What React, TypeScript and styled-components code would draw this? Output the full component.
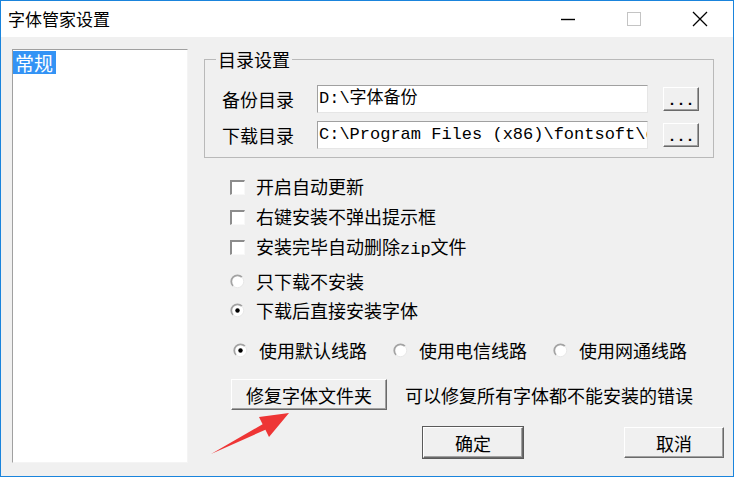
import React from 'react';
import styled, { createGlobalStyle } from 'styled-components';

const GlobalStyle = createGlobalStyle`
  html, body {
    margin: 0;
    padding: 0;
    background: #ffffff;
  }
  * {
    box-sizing: border-box;
  }
`;

const cjk = `"Noto Sans CJK SC", "Noto Sans", sans-serif`;
const mono = `"Liberation Mono", "Noto Sans CJK SC", monospace`;

const Window = styled.div`
  position: relative;
  width: 734px;
  height: 477px;
  border: 1px solid #1a84dc;
  background: #f0f0f0;
  display: flex;
  flex-direction: column;
  font-family: ${cjk};
  color: #000;
  overflow: hidden;
`;

const TitleBar = styled.div`
  height: 36px;
  background: #ffffff;
  display: flex;
  align-items: center;
  flex-shrink: 0;
`;

const Title = styled.div`
  flex: 1;
  padding-left: 7px;
  font-size: 17px;
  line-height: 36px;
`;

const CaptionButton = styled.div`
  width: 66px;
  height: 36px;
  display: flex;
  align-items: center;
  justify-content: center;
`;

const Body = styled.div`
  flex: 1;
  display: flex;
  align-items: flex-start;
  padding: 12px 9px 0 11px;
  gap: 16px;
`;

const ListBox = styled.div`
  width: 176px;
  height: 414px;
  background: #ffffff;
  border-top: 1px solid #a0a0a0;
  border-left: 1px solid #a0a0a0;
  border-right: 1px solid #f4f4f4;
  border-bottom: 1px solid #f4f4f4;
  padding: 1px 0 0 0;
`;

const ListItem = styled.div<{ $selected?: boolean }>`
  display: inline-block;
  padding: 0 3px 0 2px;
  height: 23px;
  line-height: 23px;
  font-size: 19px;
  background: ${({ $selected }) => ($selected ? '#3393f5' : 'transparent')};
  color: ${({ $selected }) => ($selected ? '#ffffff' : '#000000')};
`;

const Panel = styled.div`
  flex: 1;
  display: flex;
  flex-direction: column;
`;

const GroupBox = styled.fieldset`
  width: 510px;
  margin: 0;
  padding: 16px 14px 8px 17px;
  border: 1px solid #b9b9b9;
  display: flex;
  flex-direction: column;
  gap: 8px;
`;

const Legend = styled.legend`
  margin-left: -6px;
  padding: 0 2px;
  font-size: 18px;
  line-height: 20px;
`;

const PathRow = styled.div`
  display: flex;
  align-items: center;
  height: 28px;
`;

const PathLabel = styled.div`
  width: 95px;
  font-size: 18px;
  line-height: 28px;
`;

const PathInput = styled.div`
  width: 331px;
  height: 28px;
  background: #ffffff;
  border-top: 1px solid #a0a0a0;
  border-left: 1px solid #a0a0a0;
  border-right: 1px solid #e6e6e6;
  border-bottom: 1px solid #e6e6e6;
  padding: 0 0 0 1px;
  font-family: ${mono};
  font-size: 17px;
  line-height: 26px;
  white-space: nowrap;
  overflow: hidden;
`;

const Button3D = styled.div<{ $default?: boolean }>`
  display: flex;
  align-items: center;
  justify-content: center;
  background: #f0f0f0;
  border-top: 1px solid #ffffff;
  border-left: 1px solid #ffffff;
  border-right: 1px solid #6a6a6a;
  border-bottom: 1px solid #6a6a6a;
  box-shadow: inset -1px -1px 0 #a0a0a0
    ${({ $default }) => ($default ? ', 0 0 0 1px #5a5a5a' : '')};
  font-size: 18px;
`;

const BrowseButton = styled(Button3D)`
  margin-left: 15px;
  width: 36px;
  height: 24px;
  align-items: flex-end;
  padding-bottom: 3px;
  font-family: ${mono};
  font-weight: bold;
  font-size: 15px;
  line-height: 10px;
  letter-spacing: 0px;
`;

const OptionGroup = styled.div<{ $top: number; $gap: number }>`
  display: flex;
  flex-direction: column;
  gap: ${({ $gap }) => $gap}px;
  margin-top: ${({ $top }) => $top}px;
  padding-left: 26px;
`;

const OptionRow = styled.div`
  display: flex;
  align-items: center;
  height: 24px;
  gap: 11px;
  font-size: 18px;
`;

const CheckBox = styled.span`
  width: 15px;
  height: 15px;
  flex-shrink: 0;
  background: #ffffff;
  border-top: 2px solid #8c8c8c;
  border-left: 2px solid #8c8c8c;
  border-right: 1px solid #f8f8f8;
  border-bottom: 1px solid #f8f8f8;
  margin-top: 3px;
`;

const MonoText = styled.span`
  font-family: ${mono};
  font-size: 17px;
`;

const LineRow = styled.div`
  display: flex;
  align-items: center;
  gap: 26px;
  height: 24px;
  margin-top: 16px;
  padding-left: 29px;
`;

const RepairRow = styled.div`
  display: flex;
  align-items: center;
  gap: 18px;
  margin-top: 17px;
  padding-left: 27px;
  font-size: 18px;
`;

const RepairButton = styled(Button3D)`
  width: 156px;
  height: 31px;
`;

const Footer = styled.div`
  display: flex;
  justify-content: flex-end;
  gap: 101px;
  margin-top: 17px;
`;

const DialogButton = styled(Button3D)`
  width: 100px;
  height: 31px;
`;

const Arrow = styled.svg`
  position: absolute;
  left: 0;
  top: 0;
  pointer-events: none;
`;

const Radio: React.FC<{ checked?: boolean }> = ({ checked }) => (
  <svg width="15" height="15" viewBox="0 0 15 15" style={{ flexShrink: 0 }}>
    <circle cx="7.5" cy="7.5" r="6.2" fill="#ffffff" />
    <path d="M3.1 11.9 A6.2 6.2 0 0 1 11.9 3.1" fill="none" stroke="#a3a3a3" strokeWidth="1.8" />
    <path d="M11.9 3.1 A6.2 6.2 0 0 1 3.1 11.9" fill="none" stroke="#e8e8e8" strokeWidth="1" />
    {checked && <circle cx="7.5" cy="7.5" r="2.2" fill="#000000" />}
  </svg>
);

const App: React.FC = () => {
  return (
    <>
      <GlobalStyle />
      <Window>
        <TitleBar>
          <Title>字体管家设置</Title>
          <CaptionButton>
            <svg width="16" height="16" viewBox="0 0 16 16">
              <line x1="1" y1="8.5" x2="15" y2="8.5" stroke="#000" strokeWidth="1.4" />
            </svg>
          </CaptionButton>
          <CaptionButton>
            <svg width="16" height="16" viewBox="0 0 16 16">
              <rect x="1.5" y="1.5" width="13" height="13" fill="none" stroke="#c4c4c4" strokeWidth="1" />
            </svg>
          </CaptionButton>
          <CaptionButton>
            <svg width="16" height="16" viewBox="0 0 16 16">
              <path d="M1 1 L15 15 M15 1 L1 15" stroke="#000" strokeWidth="1.3" />
            </svg>
          </CaptionButton>
        </TitleBar>
        <Body>
          <ListBox>
            <ListItem $selected>常规</ListItem>
          </ListBox>
          <Panel>
            <GroupBox>
              <Legend>目录设置</Legend>
              <PathRow>
                <PathLabel>备份目录</PathLabel>
                <PathInput>D:\字体备份</PathInput>
                <BrowseButton>...</BrowseButton>
              </PathRow>
              <PathRow>
                <PathLabel>下载目录</PathLabel>
                <PathInput>C:\Program Files (x86)\fontsoft\d</PathInput>
                <BrowseButton>...</BrowseButton>
              </PathRow>
            </GroupBox>

            <OptionGroup $top={16} $gap={6}>
              <OptionRow>
                <CheckBox />
                开启自动更新
              </OptionRow>
              <OptionRow>
                <CheckBox />
                右键安装不弹出提示框
              </OptionRow>
              <OptionRow>
                <CheckBox />
                <span>
                  安装完毕自动删除<MonoText>zip</MonoText>文件
                </span>
              </OptionRow>
            </OptionGroup>

            <OptionGroup $top={11} $gap={5}>
              <OptionRow>
                <Radio />
                只下载不安装
              </OptionRow>
              <OptionRow>
                <Radio checked />
                下载后直接安装字体
              </OptionRow>
            </OptionGroup>

            <LineRow>
              <OptionRow>
                <Radio checked />
                使用默认线路
              </OptionRow>
              <OptionRow>
                <Radio />
                使用电信线路
              </OptionRow>
              <OptionRow>
                <Radio />
                使用网通线路
              </OptionRow>
            </LineRow>

            <RepairRow>
              <RepairButton>修复字体文件夹</RepairButton>
              可以修复所有字体都不能安装的错误
            </RepairRow>

            <Footer>
              <DialogButton $default>确定</DialogButton>
              <DialogButton>取消</DialogButton>
            </Footer>
          </Panel>
        </Body>
        <Arrow width="734" height="478" viewBox="0 0 734 478">
          <polygon
            points="210,453 261.6,423.3 258,416 288,412 268,436 264.4,428.7"
            fill="#ee3535"
          />
        </Arrow>
      </Window>
    </>
  );
};

export default App;
